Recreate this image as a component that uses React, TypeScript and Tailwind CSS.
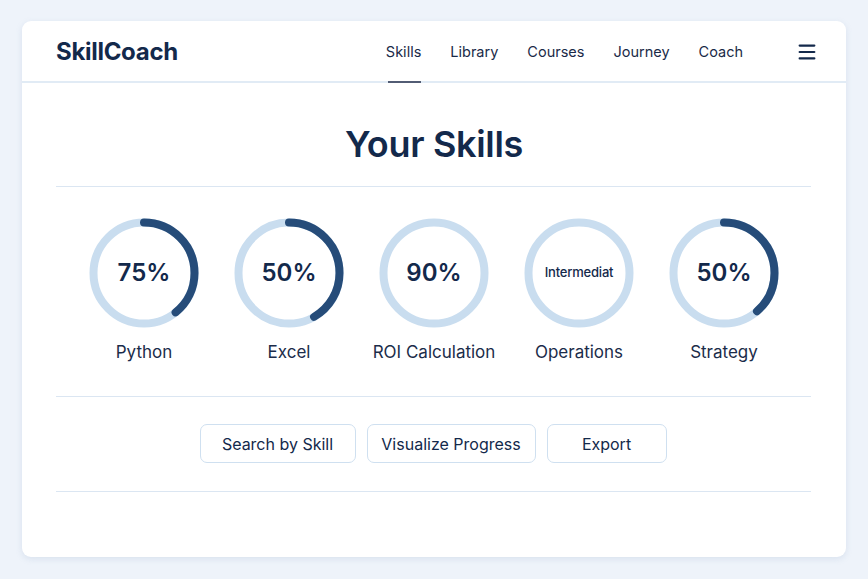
import { Menu } from "lucide-react";

const navItems = ["Skills", "Library", "Courses", "Journey", "Coach"];

const skills = [
  { name: "Python", value: "75%", arc: 141 },
  { name: "Excel", value: "50%", arc: 150 },
  { name: "ROI Calculation", value: "90%", arc: 0 },
  { name: "Operations", value: "Intermediat", arc: 0, small: true },
  { name: "Strategy", value: "50%", arc: 139 },
];

function Ring({ arc, value, small }: { arc: number; value: string; small?: boolean }) {
  const r = 50.5;
  const c = 2 * Math.PI * r;
  const len = (arc / 360) * c;
  return (
    <div className="relative w-[110px] h-[110px]">
      <svg width="110" height="110" viewBox="0 0 110 110" className="absolute inset-0">
        <circle cx="55" cy="55" r={r} fill="none" stroke="#c9ddef" strokeWidth="8" />
        {arc > 0 && (
          <circle
            cx="55"
            cy="55"
            r={r}
            fill="none"
            stroke="#264c79"
            strokeWidth="8"
            strokeLinecap="round"
            strokeDasharray={`${len} ${c}`}
            transform="rotate(-90 55 55)"
          />
        )}
      </svg>
      <div className="absolute inset-0 flex items-center justify-center">
        <span
          className={
            small
              ? "text-[13px] font-medium text-[#13294b] tracking-[-0.2px]"
              : "text-[24px] font-semibold text-[#13294b]"
          }
        >
          {value}
        </span>
      </div>
    </div>
  );
}

export default function App() {
  return (
    <div
      className="min-h-[579px] bg-[#eef3fa] pt-[21px] px-[22px]"
      style={{ fontFamily: "Inter, 'Noto Sans', sans-serif" }}
    >
      <div className="bg-white rounded-[9px] shadow-[0_2px_6px_rgba(120,150,190,0.18)] h-[536px]">
        {/* Header */}
        <header className="h-[62px] pt-[2px] border-b-2 border-[#e1ebf5] flex items-center pl-[34px] pr-[28px]">
          <div className="text-[24px] font-bold text-[#13294b] tracking-[-0.3px]">SkillCoach</div>
          <nav className="ml-auto flex items-center gap-[29px] h-full text-[14.5px] text-[#1a2a48]">
            {navItems.map((item, i) => (
              <div key={item} className="relative h-full flex items-center">
                {item}
                {i === 0 && (
                  <span className="absolute left-[2px] right-0 -bottom-[2px] h-[2px] bg-[#525c74]" />
                )}
              </div>
            ))}
          </nav>
          <Menu className="ml-[53px] text-[#13294b]" size={22} strokeWidth={2.4} />
        </header>

        <div className="px-[34px]">
          <h1 className="pt-[41px] text-center text-[36px] leading-[40px] font-semibold text-[#13294b] tracking-[-0.3px]">
            Your Skills
          </h1>
          <div className="mt-[22px] border-t border-[#dbe6f2] mr-[1px]" />

          {/* Skill rings */}
          <div className="flex justify-center pt-[31px] pb-[32px]">
            {skills.map((s) => (
              <div key={s.name} className="w-[145px] flex flex-col items-center">
                <Ring arc={s.arc} value={s.value} small={s.small} />
                <div className="mt-[12px] text-[17px] leading-[24px] text-[#1b2c4a]">{s.name}</div>
              </div>
            ))}
          </div>
          <div className="border-t border-[#dbe6f2] mr-[1px]" />

          {/* Actions */}
          <div className="flex justify-center gap-[11px] pt-[27px] pb-[28px] pr-[2px]">
            <button className="w-[156px] h-[39px] rounded-[7px] border border-[#cfe0f0] text-[16px] text-[#13294b]">
              Search by Skill
            </button>
            <button className="w-[169px] h-[39px] rounded-[7px] border border-[#cfe0f0] text-[16px] text-[#13294b]">
              Visualize Progress
            </button>
            <button className="w-[120px] h-[39px] rounded-[7px] border border-[#cfe0f0] text-[16px] text-[#13294b]">
              Export
            </button>
          </div>
          <div className="border-t border-[#dbe6f2] mr-[1px]" />
        </div>
      </div>
    </div>
  );
}
